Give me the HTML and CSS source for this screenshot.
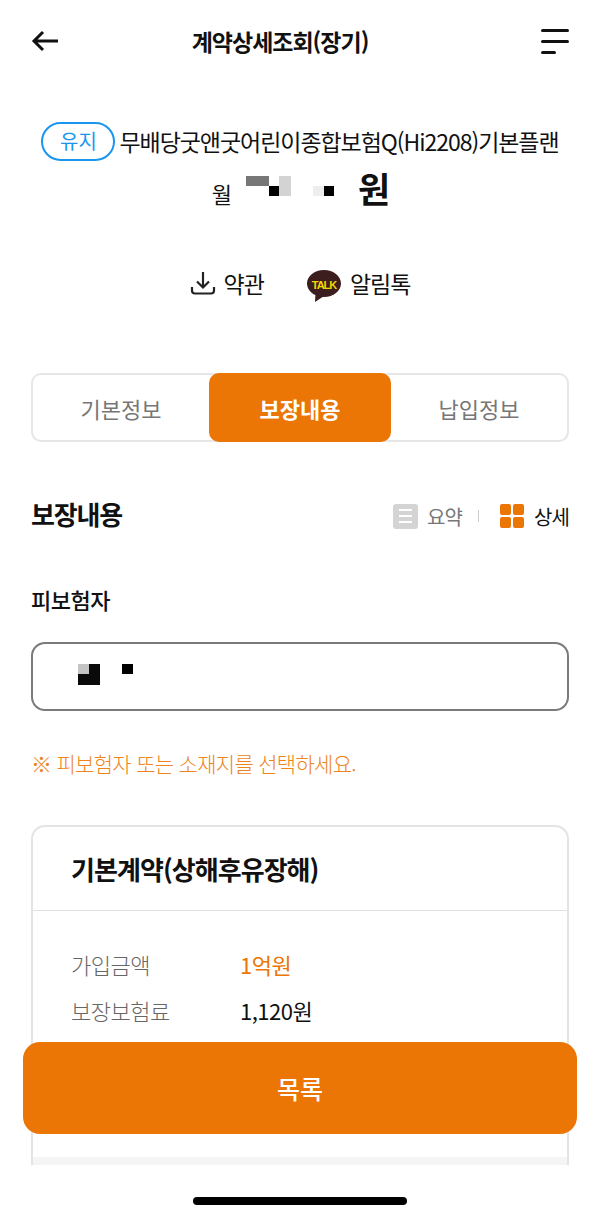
FILE: index.html
```html
<!DOCTYPE html>
<html lang="ko">
<head>
  <meta charset="UTF-8">
  <title>계약상세조회(장기)</title>
  <link rel="stylesheet" href="styles.css">
</head>
<body>
  <div class="screen">
    <header class="topbar">
      <svg class="icon-back" width="28" height="22" viewBox="0 0 28 22" fill="none" stroke="#111" stroke-width="3">
        <path d="M27 11H3M12 2L3 11l9 9"/>
      </svg>
      <h1 class="topbar-title">계약상세조회(장기)</h1>
      <div class="icon-menu"><span></span><span></span><span></span></div>
    </header>

    <section class="summary">
      <div class="product">
        <span class="badge">유지</span>
        <span class="product-name">무배당굿앤굿어린이종합보험Q(Hi2208)기본플랜</span>
      </div>
      <div class="amount">
        <span class="amount-label">월</span>
        <svg class="amount-mask" width="126" height="34" viewBox="0 0 126 34">
          <rect x="14" y="2" width="23" height="10" fill="#777"/>
          <rect x="37" y="12" width="10" height="10" fill="#000"/>
          <rect x="47" y="2" width="12" height="20" fill="#d3d3d3"/>
          <rect x="81" y="12" width="11" height="10" fill="#eee"/>
          <rect x="92" y="12" width="10" height="10" fill="#000"/>
        </svg>
        <span class="amount-unit">원</span>
      </div>
      <div class="links">
        <a class="link">
          <svg width="26" height="26" viewBox="0 0 26 26" fill="none" stroke="#222" stroke-width="2.2">
            <path d="M13 2v15M7 11.500l6 6 6-6"/>
            <path d="M2 17v3.500a3 3 0 0 0 3 3h16a3 3 0 0 0 3-3V17"/>
          </svg>
          약관
        </a>
        <a class="link">
          <svg class="icon-talk" width="36" height="34" viewBox="0 0 36 34">
            <path d="M18 1C8.600 1 1 7 1 14.500c0 5 3.400 9.300 8.400 11.600L9 33l7.500-5c.5 0 1 .1 1.500.1 9.400 0 17-6.100 17-13.600S27.400 1 18 1z" fill="#3c1e1e"/>
            <text x="18" y="19.500" text-anchor="middle" class="talk-text">TALK</text>
          </svg>
          알림톡
        </a>
      </div>
    </section>

    <nav class="tabs">
      <div class="tab">기본정보</div>
      <div class="tab active">보장내용</div>
      <div class="tab">납입정보</div>
    </nav>

    <section class="coverage-head">
      <h2 class="section-title">보장내용</h2>
      <div class="view-switch">
        <span class="view-icon-list"><i></i><i></i><i></i></span>
        <span class="view-off">요약</span>
        <span class="view-sep"></span>
        <span class="view-icon-grid"><i></i><i></i><i></i><i></i></span>
        <span class="view-on">상세</span>
      </div>
    </section>

    <div class="field-label">피보험자</div>
    <div class="select-box">
      <svg width="60" height="24" viewBox="0 0 60 24">
        <rect x="0" y="0" width="11" height="10" fill="#c4c4c4"/>
        <rect x="11" y="0" width="11" height="21" fill="#0a0a0a"/>
        <rect x="0" y="10" width="11" height="11" fill="#0a0a0a"/>
        <rect x="44" y="0" width="11" height="10" fill="#000"/>
      </svg>
    </div>
    <p class="notice">※ 피보험자 또는 소재지를 선택하세요.</p>

    <section class="card">
      <div class="card-head">기본계약(상해후유장해)</div>
      <div class="card-body">
        <div class="row"><span class="row-key">가입금액</span><span class="row-val accent">1억원</span></div>
        <div class="row"><span class="row-key">보장보험료</span><span class="row-val">1,120원</span></div>
      </div>
      <div class="card-foot"></div>
    </section>

    <button class="btn-list">목록</button>
    <div class="home-bar"></div>
  </div>
</body>
</html>
```

FILE: styles.css
```css
* {
  box-sizing: border-box;
}

body {
  margin: 0;
  background: #fff;
  font-family: "Noto Sans CJK KR", "Noto Sans", sans-serif;
  color: #111;
}

.screen {
  position: relative;
  width: 600px;
  height: 1217px;
  overflow: hidden;
}

/* top bar */
.topbar {
  display: flex;
  align-items: center;
  justify-content: space-between;
  height: 82px;
  padding: 0 31px;
}

.topbar-title {
  margin: 0 40px 0 0;
  font-size: 23px;
  font-weight: 700;
  letter-spacing: -1px;
}

.icon-menu {
  display: flex;
  flex-direction: column;
  gap: 8px;
  width: 28px;
}

.icon-menu span {
  display: block;
  height: 3px;
  background: #111;
  border-radius: 2px;
}

.icon-menu span:nth-child(3) {
  width: 15px;
}

/* summary */
.summary {
  text-align: center;
  padding-top: 39px;
}

.product {
  display: flex;
  align-items: center;
  justify-content: center;
  gap: 4px;
  height: 40px;
}

.badge {
  width: 74px;
  height: 39px;
  line-height: 34px;
  border: 2px solid #1a96f0;
  border-radius: 20px;
  color: #1a96f0;
  font-size: 20px;
}

.product-name {
  font-size: 23px;
  letter-spacing: -1.050px;
}

.amount {
  display: flex;
  align-items: flex-end;
  justify-content: center;
  height: 48px;
  margin-top: 7px;
}

.amount-label {
  font-size: 22px;
  line-height: 32px;
  margin-bottom: 7px;
  margin-left: 2px;
}

.amount-mask {
  margin-bottom: 8px;
}

.amount-unit {
  font-size: 35px;
  font-weight: 700;
  line-height: 44px;
  margin-bottom: 6px;
}

.links {
  display: flex;
  justify-content: center;
  gap: 42px;
  margin-top: 49px;
}

.link {
  display: flex;
  align-items: center;
  gap: 8px;
  height: 36px;
  font-size: 23px;
  letter-spacing: -1px;
}

.icon-talk {
  margin-top: 6px;
}

.talk-text {
  font-family: "Liberation Sans", sans-serif;
  font-size: 11px;
  font-weight: 700;
  fill: #f5d800;
}

/* tabs */
.tabs {
  display: flex;
  height: 69px;
  margin: 72px 31px 0;
  border: 2px solid #e6e6e6;
  border-radius: 10px;
}

.tab {
  flex: 1;
  display: flex;
  align-items: center;
  justify-content: center;
  font-size: 22px;
  color: #777;
}

.tab.active {
  flex: none;
  width: 182px;
  margin: -2px 0;
  background: #eb7505;
  border-radius: 10px;
  color: #fff;
  font-weight: 700;
}

/* coverage header */
.coverage-head {
  display: flex;
  align-items: center;
  justify-content: space-between;
  margin: 49px 31px 0;
  height: 44px;
}

.section-title {
  margin: 0;
  font-size: 26px;
  font-weight: 700;
  letter-spacing: -1.200px;
}

.view-switch {
  display: flex;
  align-items: center;
  padding-top: 6px;
  font-size: 20px;
  letter-spacing: -0.900px;
}

.view-icon-list {
  display: flex;
  flex-direction: column;
  justify-content: center;
  gap: 4px;
  width: 25px;
  height: 25px;
  padding: 0 6px;
  background: #d4d4d4;
  border-radius: 3px;
}

.view-icon-list i {
  display: block;
  height: 2px;
  background: #fff;
}

.view-off {
  margin-left: 9px;
  color: #777;
}

.view-sep {
  width: 1px;
  height: 12px;
  margin: 0 21px 0 16px;
  background: #ccc;
}

.view-icon-grid {
  display: grid;
  grid-template-columns: 11px 11px;
  gap: 2px;
  width: 24px;
}

.view-icon-grid i {
  height: 11px;
  background: #eb7505;
  border-radius: 2px;
}

.view-on {
  margin-left: 10px;
}

/* insured select */
.field-label {
  margin: 47px 31px 0;
  font-size: 22px;
  font-weight: 500;
  line-height: 34px;
  letter-spacing: -0.500px;
}

.select-box {
  height: 69px;
  margin: 26px 31px 0;
  padding: 20px 45px 0;
  border: 2px solid #7a7a7a;
  border-radius: 14px;
}

.notice {
  margin: 35px 31px 0;
  font-size: 21px;
  font-weight: 300;
  line-height: 34px;
  letter-spacing: -0.700px;
  color: #ee8420;
}

/* coverage card */
.card {
  height: 340px;
  margin: 45px 31px 0;
  border: 2px solid #e4e4e4;
  border-bottom: 0;
  border-radius: 14px 14px 0 0;
  overflow: hidden;
}

.card-head {
  display: flex;
  align-items: center;
  height: 84px;
  padding: 0 38px;
  border-bottom: 1px solid #e0e0e0;
  font-size: 26px;
  font-weight: 700;
  letter-spacing: -0.950px;
}

.card-body {
  padding: 30px 38px 0;
  height: 246px;
}

.row {
  display: flex;
  align-items: center;
  height: 46px;
  font-size: 22px;
  letter-spacing: -0.500px;
}

.row-key {
  width: 169px;
  font-weight: 300;
  color: #666;
}

.accent {
  color: #eb7505;
}

.card-foot {
  height: 10px;
  background: #f5f5f5;
}

/* overlays */
.btn-list {
  position: absolute;
  left: 23px;
  top: 1042px;
  width: 554px;
  height: 92px;
  border: none;
  border-radius: 17px;
  background: #eb7505;
  color: #fff;
  font-family: inherit;
  font-size: 25px;
  font-weight: 500;
}

.home-bar {
  position: absolute;
  left: 193px;
  top: 1197px;
  width: 214px;
  height: 8px;
  background: #000;
  border-radius: 4px;
}
```
